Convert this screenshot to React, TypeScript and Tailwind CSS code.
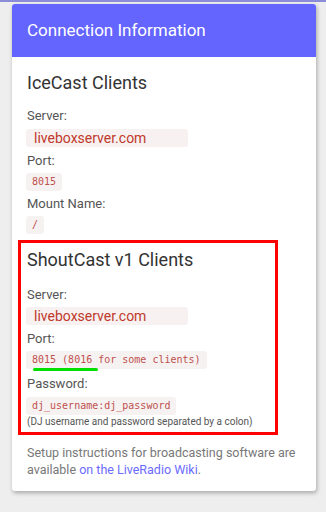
export default function App() {
  const code = "rounded-[3px] bg-[#f6f2f2] px-[6px] py-[3px] font-['DejaVu_Sans_Mono',monospace] text-[10px] leading-[12px] text-[#c0504d]";
  const server = "w-[162px] rounded-[3px] bg-[#f7f1f1] pl-[8px] py-[1px] text-[14px] leading-[16px] text-[#c0392b]";
  const label = "text-[13px] leading-[16px] text-[#555555]";

  return (
    <div className="relative h-[512px] w-[326px] overflow-hidden bg-[#eeeeee] font-['Roboto',sans-serif]">
      {/* strip of the page header above */}
      <div className="h-[2px] w-full bg-[#8c8cd8]" />
      <div className="ml-[12px] mt-[2px] w-[304px] overflow-hidden rounded-[3px] bg-white shadow-[1px_2px_4px_rgba(0,0,0,0.3)]">
        <div className="flex h-[53px] items-center bg-[#6464ff] pl-[15px] text-[17px] text-white">
          Connection Information
        </div>

        <div className="px-[15px] pb-[13px] pt-[14px]">
          <h2 className="text-[18px] leading-[24px] text-[#333333]">IceCast Clients</h2>

          <div className={`${label} mt-[13px]`}>Server:</div>
          <div className={`${server} -ml-px mt-[5px]`}>liveboxserver.com</div>
          <div className={`${label} mt-[6px]`}>Port:</div>
          <div className="mt-[4px] flex">
            <span className={`${code} -ml-px`}>8015</span>
          </div>
          <div className={`${label} mt-[5px]`}>Mount Name:</div>
          <div className="mt-[4px] flex">
            <span className={`${code} -ml-px`}>/</span>
          </div>

          <div className="-ml-[9px] mt-[6px] w-[260px] border-[3px] border-[#ff0000] pb-[4px] pl-[6px] pt-[5px]">
            <h2 className="text-[18px] leading-[24px] text-[#333333]">ShoutCast v1 Clients</h2>

            <div className={`${label} mt-[15px]`}>Server:</div>
            <div className={`${server} -ml-px mt-[4px]`}>liveboxserver.com</div>
            <div className={`${label} mt-[6px]`}>Port:</div>
            <div className="relative mt-[4px] flex">
              <span className={`${code} -ml-px`}>8015 (8016 for some clients)</span>
              <div className="absolute left-[6px] top-[17px] h-[3px] w-[65px] rounded-full bg-[#00e000]" />
            </div>
            <div className={`${label} mt-[7px]`}>Password:</div>
            <div className="mt-[5px] flex">
              <span className={`${code} -ml-px`}>dj_username:dj_password</span>
            </div>
            <div className="mt-[1px] text-[10px] leading-[12px] text-[#555555]">
              (DJ username and password separated by a colon)
            </div>
          </div>

          <p className="mt-[9px] text-[12.5px] leading-[17px] text-[#777777]">
            Setup instructions for broadcasting software are available{" "}
            <a className="text-[#6b6bff]">on the LiveRadio Wiki</a>.
          </p>
        </div>
      </div>
    </div>
  );
}
